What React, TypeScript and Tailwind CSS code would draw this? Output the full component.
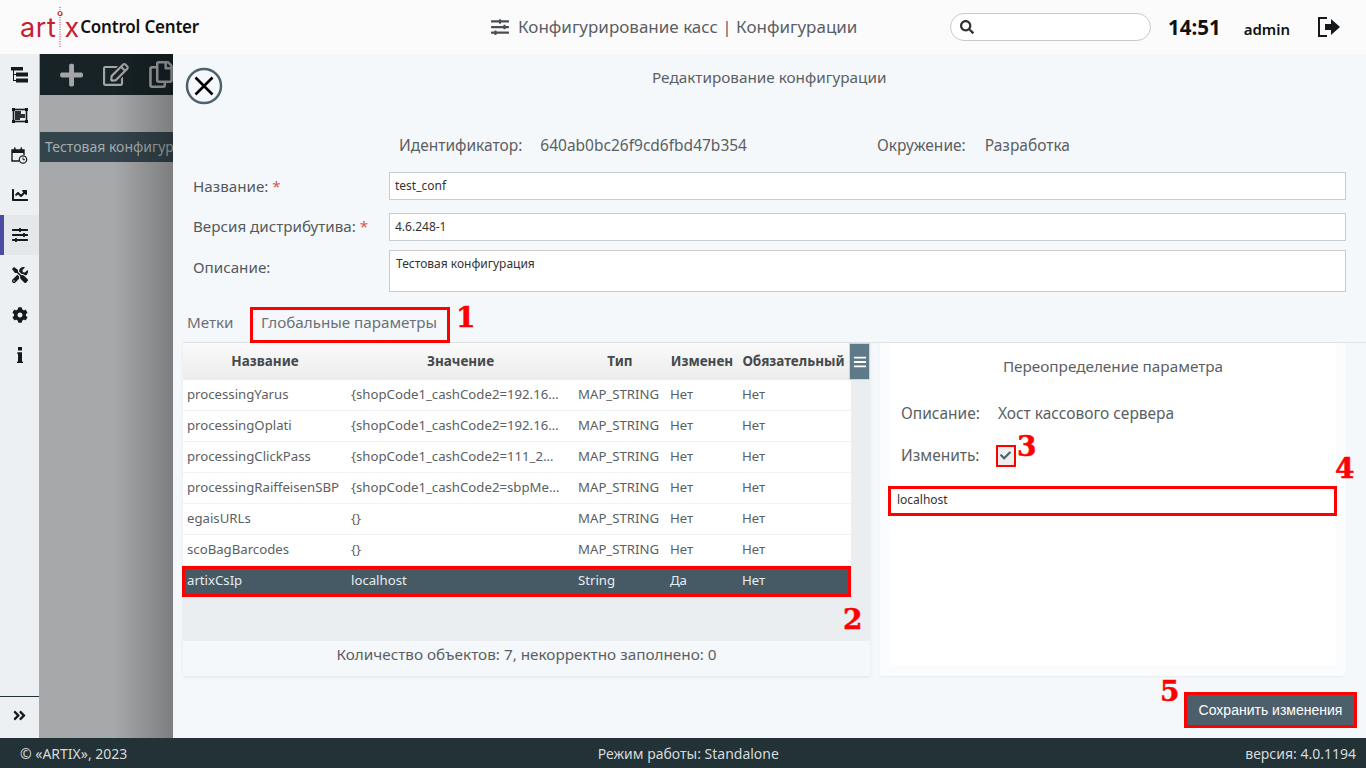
import React from "react";
import { FaChartLine, FaSlidersH, FaTools, FaCog, FaAngleDoubleRight, FaPlus, FaRegEdit, FaRegCopy, FaSearch, FaCheck, FaBars } from "react-icons/fa";

const UI = "font-['Noto_Sans','Open_Sans',sans-serif]";

const TreeIcon = () => (
  <svg width="17" height="16" viewBox="0 0 17 16" fill="#15191c">
    <rect x="0" y="0" width="12" height="3.5" />
    <rect x="5" y="5.5" width="12" height="4" />
    <rect x="5" y="11.5" width="12" height="4" />
    <path d="M2 3v11h3v-1H3V8h2V7H3V3z" />
  </svg>
);
const FrameIcon = () => (
  <svg width="16" height="15" viewBox="0 0 16 15" fill="none">
    <rect x="1.5" y="1.5" width="13" height="12" stroke="#15191c" strokeWidth="1.6" />
    <rect x="0" y="0" width="3" height="3" fill="#15191c" />
    <rect x="13" y="0" width="3" height="3" fill="#15191c" />
    <rect x="0" y="12" width="3" height="3" fill="#15191c" />
    <rect x="13" y="12" width="3" height="3" fill="#15191c" />
    <path d="M3 3h6v3h4v4H8v2H3z" fill="#15191c" opacity="0.9" />
    <rect x="9.5" y="3" width="3.5" height="3" fill="#eaeef1" />
  </svg>
);
const CalIcon = () => (
  <svg width="17" height="17" viewBox="0 0 17 17" fill="none">
    <path d="M8 14H1V3h12v5" stroke="#15191c" strokeWidth="1.4" />
    <rect x="1" y="3" width="12" height="3" fill="#15191c" />
    <rect x="3" y="0.5" width="1.6" height="3.5" fill="#15191c" />
    <rect x="9.5" y="0.5" width="1.6" height="3.5" fill="#15191c" />
    <circle cx="12" cy="12.5" r="3.7" stroke="#15191c" strokeWidth="1.2" fill="#eaeef1" />
    <path d="M12 10.5v2.2h2" stroke="#15191c" strokeWidth="1" />
  </svg>
);
const InfoIcon = () => (
  <svg width="6" height="16" viewBox="0 0 6 16" fill="#15191c">
    <rect x="1" y="0" width="4" height="3.5" />
    <rect x="1" y="5.5" width="4" height="9.5" />
    <rect x="0" y="5.5" width="5" height="1.2" />
    <rect x="0" y="14.6" width="6" height="1.4" />
  </svg>
);
const LogoutIcon = () => (
  <svg width="24" height="24" viewBox="0 0 24 24" fill="none">
    <path d="M10 3H2v18h8" stroke="#15191c" strokeWidth="2" />
    <path d="M8 9h6V4l9 8-9 8v-5H8z" fill="#15191c" />
  </svg>
);
const CloseIcon = () => (
  <svg width="38" height="38" viewBox="0 0 38 38" fill="none">
    <circle cx="19" cy="19" r="17" stroke="#4d626d" strokeWidth="2.5" />
    <path d="M10.5 10.5l17 17M27.5 10.5l-17 17" stroke="#000" strokeWidth="2.6" />
  </svg>
);
const LogoDots = () => (
  <svg width="8" height="40" viewBox="0 0 8 40" fill="none">
    <circle cx="4" cy="6.5" r="2" stroke="#c5202f" strokeWidth="1.2" />
    <path d="M4 0v3M4 10v30" stroke="#c5202f" strokeWidth="1" strokeDasharray="1 1.4" />
  </svg>
);

const nav = [
  <TreeIcon />,
  <FrameIcon />,
  <CalIcon />,
  <FaChartLine size={16} color="#15191c" />,
  <FaSlidersH size={16} color="#15191c" />,
  <FaTools size={16} color="#15191c" />,
  <FaCog size={16} color="#15191c" />,
  <InfoIcon />,
];

const rows = [
  ["processingYarus", "{shopCode1_cashCode2=192.16…", "MAP_STRING", "Нет", "Нет"],
  ["processingOplati", "{shopCode1_cashCode2=192.16…", "MAP_STRING", "Нет", "Нет"],
  ["processingClickPass", "{shopCode1_cashCode2=111_2…", "MAP_STRING", "Нет", "Нет"],
  ["processingRaiffeisenSBP", "{shopCode1_cashCode2=sbpMe…", "MAP_STRING", "Нет", "Нет"],
  ["egaisURLs", "{}", "MAP_STRING", "Нет", "Нет"],
  ["scoBagBarcodes", "{}", "MAP_STRING", "Нет", "Нет"],
];

const Num = ({ className, children }: { className: string; children: React.ReactNode }) => (
  <span className={"absolute font-['DejaVu_Serif',serif] font-bold text-[#ff0000] text-[28px] leading-none [-webkit-text-stroke:0.5px_#ff0000] " + className}>{children}</span>
);

const cols = "grid grid-cols-[164px_227px_92px_72px_111px]";

export default function App() {
  return (
    <div className={"relative flex h-[768px] w-[1366px] flex-col overflow-hidden bg-[#f5f8fb] text-[#54595e] " + UI}>
      {/* header */}
      <header className="flex h-[54px] shrink-0 items-center bg-[#fbfbfb]">
        <div className="ml-[20px] flex w-[185px] items-center">
          <span className="font-['Inter',sans-serif] text-[27px] font-normal leading-none tracking-[0.6px] text-[#c5202f]">art</span>
          <LogoDots />
          <span className="font-['Inter',sans-serif] text-[27px] font-normal leading-none text-[#c5202f]">x</span>
          <span className="ml-[1px] text-[17px] font-semibold tracking-[-0.2px] text-[#111] whitespace-nowrap">Control Center</span>
        </div>
        <div className="ml-[286px] flex w-[440px] items-center gap-[9px] text-[17px] text-[#5b5f63]">
          <FaSlidersH size={18} color="#4a4e52" />
          <span className="whitespace-nowrap">Конфигурирование касс | Конфигурации</span>
        </div>
        <div className="ml-[19px] flex h-[28px] w-[201px] items-center rounded-[14px] border border-[#c9c9c9] bg-white pl-[9px]">
          <FaSearch size={14} color="#333" />
        </div>
        <span className="ml-[17px] text-[20.5px] font-bold text-[#111]">14:51</span>
        <span className="ml-[23px] mt-[4px] text-[15px] font-semibold text-[#111]">admin</span>
        <span className="ml-[27px] flex"><LogoutIcon /></span>
      </header>

      <div className="flex min-h-0 flex-1">
        {/* sidebar */}
        <aside className="flex w-[40px] shrink-0 flex-col border-r border-[#a9a9a9] bg-[#ecf0f3]">
          <div className="flex flex-1 flex-col">
            {nav.map((icon, i) => (
              <div key={i} className={"flex h-[40px] items-center justify-center " + (i === 4 ? "border-l-4 border-[#4b4ba3] bg-[#e5e8ea] pr-[4px]" : "") + (i === 0 ? " mt-[1px]" : "")}>
                {icon}
              </div>
            ))}
          </div>
          <div className="flex h-[42px] items-center justify-center border-t border-[#223236] pb-[4px]">
            <FaAngleDoubleRight size={15} color="#15191c" />
          </div>
        </aside>

        {/* dimmed page */}
        <div className="relative w-[133px] shrink-0 overflow-hidden bg-[#a7a8a9]">
          <div className="flex h-[41px] items-center gap-[20px] bg-[#172326] pl-[20px] text-[#a3a5a6]">
            <FaPlus size={26} />
            <FaRegEdit size={29} />
            <FaRegCopy size={27} />
          </div>
          <div className="mt-[37px] flex h-[30px] items-center bg-[#34444c] pb-[2px] pl-[5px] text-[14px] whitespace-nowrap text-[#a7acae]">Тестовая конфигурация</div>
          <div className="absolute inset-0 bg-gradient-to-r from-transparent from-[55%] to-black/25"></div>
        </div>

        {/* drawer */}
        <main className="flex min-w-0 flex-1 flex-col bg-[#f5f8fb]">
          <div className="flex h-[53px] shrink-0 pl-[12px] pt-[13px]">
            <CloseIcon />
            <div className="mt-[-1px] ml-[429px] text-[15.3px] text-[#5b5f63]">Редактирование конфигурации</div>
          </div>

          <div className="flex h-[65px] shrink-0 items-end pb-[15px] text-[15.5px] text-[#5b5f63]">
            <span className="ml-[226px]">Идентификатор:</span>
            <span className="ml-[18px]">640ab0bc26f9cd6fbd47b354</span>
            <span className="ml-[130px]">Окружение:</span>
            <span className="ml-[19px]">Разработка</span>
          </div>

          <div className="mr-[20px] flex h-[28px] shrink-0 items-center">
            <label className="ml-[20px] w-[196px] shrink-0 text-[15.2px]">Название: <span className="text-[#d9534f]">*</span></label>
            <div className="flex h-full flex-1 items-center border border-[#c9ccce] bg-white pl-[5px] text-[12px] text-[#333]">test_conf</div>
          </div>
          <div className="mr-[20px] mt-[13px] flex h-[28px] shrink-0 items-center">
            <label className="ml-[20px] w-[196px] shrink-0 whitespace-nowrap pb-[1px] text-[15.2px]">Версия дистрибутива: <span className="text-[#d9534f]">*</span></label>
            <div className="flex h-full flex-1 items-center border border-[#c9ccce] bg-white pl-[5px] text-[12px] text-[#333]">4.6.248-1</div>
          </div>
          <div className="mr-[20px] mt-[9px] flex h-[42px] shrink-0">
            <label className="ml-[20px] mt-[6px] w-[196px] shrink-0 text-[15.2px]">Описание:</label>
            <div className="h-full flex-1 border border-[#c9ccce] bg-white pl-[6px] pt-[4px] text-[12px] text-[#333]">Тестовая конфигурация</div>
          </div>

          {/* tabs */}
          <div className="ml-[10px] mt-[15px] flex h-[36px] shrink-0 border-b border-[#dfe3e6] pr-[10px]">
            <div className="flex h-[35px] w-[67px] items-center pb-[5px] pl-[4px] text-[15.2px] text-[#6b7075]">Метки</div>
            <div className="flex h-[36px] w-[200px] items-center border-[3px] border-[#ff0000] pb-[5px] pl-[8px] text-[15.2px] text-[#6b7075] whitespace-nowrap">Глобальные параметры</div>
          </div>

          <div className="ml-[10px] flex h-[333px] shrink-0">
            {/* table */}
            <section className="flex w-[687px] shrink-0 flex-col shadow-[0_1px_3px_rgba(0,0,0,0.08)]">
              <div className="flex h-[37px] shrink-0 bg-gradient-to-b from-[#fafafa] to-[#ececec]">
                <div className={cols + " w-[666px] text-center text-[13.5px] font-bold leading-[36px] text-[#44494d]"}>
                  <span>Название</span><span>Значение</span><span>Тип</span><span>Изменен</span><span className="whitespace-nowrap">Обязательный</span>
                </div>
                <div className="flex w-[21px] items-center justify-center border border-[#cfd4d7] bg-[#5e7988]"><FaBars size={14} color="#fff" /></div>
              </div>
              <div className="flex h-[261px] shrink-0 flex-col bg-[#ebeef0]">
                {rows.map((r) => (
                  <div key={r[0]} className={cols + " h-[31px] w-[668px] shrink-0 items-center border-b border-[#f0f2f3] bg-white pb-[1px] text-[13.2px] text-[#5b6064]"}>
                    {r.map((c, i) => <span key={i} className="whitespace-nowrap pl-[4px]">{c}</span>)}
                  </div>
                ))}
                <div className={cols + " h-[31px] w-[669px] shrink-0 ml-[-1px] items-center border-[3px] border-[#ff0000] bg-[#465a66] pb-[2px] text-[13.2px] text-[#e8edf0]"}>
                  {["artixCsIp", "localhost", "String", "Да", "Нет"].map((c, i) => <span key={i} className="pl-[2px]">{c}</span>)}
                </div>
              </div>
              <div className="flex flex-1 items-center justify-center pb-[9px] text-[15.3px] text-[#5b5f63]">Количество объектов: 7, некорректно заполнено: 0</div>
            </section>

            {/* override panel */}
            <section className="ml-[10px] flex w-[466px] shrink-0 flex-col rounded-br-[6px] bg-[#fbfcfd] px-[10px] pb-[11px] shadow-[0_1px_2px_rgba(0,0,0,0.05)]">
              <div className="flex flex-1 flex-col bg-white">
                <div className="mt-[12px] text-center text-[15.3px] text-[#5b5f63]">Переопределение параметра</div>
                <div className="mt-[24px] flex text-[15.5px] text-[#5b5f63]">
                  <span className="ml-[11px]">Описание:</span>
                  <span className="ml-[18px]">Хост кассового сервера</span>
                </div>
                <div className="mt-[19px] flex items-center text-[15.5px] text-[#5b5f63]">
                  <span className="ml-[11px]">Изменить:</span>
                  <span className="ml-[16px] flex h-[22px] w-[20px] items-center justify-center border-2 border-[#ff0000] bg-[#eeeeee]"><FaCheck size={11} color="#4d626d" /></span>
                </div>
                <div className="ml-[-2px] mr-[-1px] mt-[19px] flex h-[30px] items-center border-[3px] border-[#ff0000] bg-white pb-[3px] pl-[6px] text-[12px] text-[#333]">localhost</div>
              </div>
            </section>
          </div>

          <div className="flex flex-1 items-start justify-end pr-[9px] pt-[16px]">
            <button className="h-[36px] w-[173px] border-[3px] border-[#ff0000] bg-[#4c5f6b] font-['Liberation_Sans',sans-serif] text-[14px] text-white">Сохранить изменения</button>
          </div>
        </main>
      </div>

      <footer className="flex h-[30px] shrink-0 items-center justify-between bg-[#223236] pl-[20px] pr-[10px] text-[14px] text-[#d5dadc]">
        <span>© «ARTIX», 2023</span>
        <span className="ml-[4px]">Режим работы: Standalone</span>
        <span>версия: 4.0.1194</span>
      </footer>

      <Num className="left-[456px] top-[304px]">1</Num>
      <Num className="left-[843px] top-[606px]">2</Num>
      <Num className="left-[1017px] top-[433px]">3</Num>
      <Num className="left-[1335px] top-[455px]">4</Num>
      <Num className="left-[1160px] top-[678px]">5</Num>
    </div>
  );
}
